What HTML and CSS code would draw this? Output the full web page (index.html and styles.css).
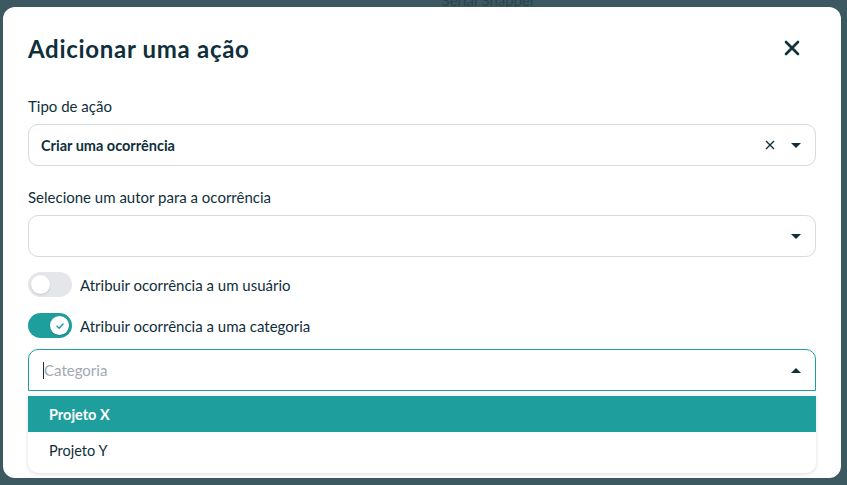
FILE: index.html
```html
<!DOCTYPE html>
<html lang="pt-BR">

<head>
    <meta charset="UTF-8" />
    <meta name="viewport" content="width=device-width" />
    <link rel="stylesheet" href="styles.css">
</head>

<body>
    <div class="backdrop">
        <div class="bg_strip">
            <span class="bg_title">Serial Snapper</span>
        </div>

        <div class="modal">
            <div class="modal_header">
                <h1 class="modal_title">Adicionar uma ação</h1>
                <button class="close_btn" aria-label="Fechar">
                    <svg width="16" height="16" viewBox="0 0 16 16">
                        <path d="M2 2 L14 14 M14 2 L2 14" stroke="#0f2f3b" stroke-width="2.6" stroke-linecap="round" />
                    </svg>
                </button>
            </div>

            <div class="field">
                <label class="field_label">Tipo de ação</label>
                <div class="select">
                    <span class="select_value">Criar uma ocorrência</span>
                    <span class="select_icons">
                        <svg width="10" height="10" viewBox="0 0 10 10">
                            <path d="M1 1 L9 9 M9 1 L1 9" stroke="#0f2f3b" stroke-width="1.4" />
                        </svg>
                        <span class="caret down"></span>
                    </span>
                </div>
            </div>

            <div class="field last">
                <label class="field_label">Selecione um autor para a ocorrência</label>
                <div class="select">
                    <span class="select_value"></span>
                    <span class="select_icons">
                        <span class="caret down"></span>
                    </span>
                </div>
            </div>

            <div class="toggle_row">
                <span class="toggle"><span class="knob"></span></span>
                <span class="toggle_label">Atribuir ocorrência a um usuário</span>
            </div>

            <div class="toggle_row">
                <span class="toggle on">
                    <span class="knob">
                        <svg width="10" height="10" viewBox="0 0 10 10">
                            <path d="M2 5.2 L4.2 7.3 L8 3" fill="none" stroke="#1f9e9e" stroke-width="1.5" stroke-linecap="round" stroke-linejoin="round" />
                        </svg>
                    </span>
                </span>
                <span class="toggle_label">Atribuir ocorrência a uma categoria</span>
            </div>

            <div class="combo">
                <div class="select open">
                    <span class="select_value placeholder"><span class="text_caret"></span>Categoria</span>
                    <span class="select_icons">
                        <span class="caret up"></span>
                    </span>
                </div>
                <ul class="menu">
                    <li class="menu_item active">Projeto X</li>
                    <li class="menu_item">Projeto Y</li>
                </ul>
            </div>
        </div>
    </div>
</body>

</html>
```

FILE: styles.css
```css
/* === modal css === */

* {
    box-sizing: border-box;
}

body {
    margin: 0;
    font-family: Lato, "Noto Sans", sans-serif;
    color: #0f2f3b;
}

.backdrop {
    /* dark overlay behind the modal */
    width: 847px;
    height: 485px;
    background: #3c5962;
    padding: 7px 6px 7px 3px;
    position: relative;
    overflow: hidden;
}

.bg_strip {
    /* page behind, peeking at the top */
    position: absolute;
    top: -9px;
    left: 0;
    right: 0;
    display: flex;
    justify-content: center;
}

.bg_title {
    margin-left: 130px;
    font-size: 15px;
    color: #2b454d;
}

.modal {
    position: relative;
    background: #fff;
    border-radius: 12px;
    height: 471px;
    padding: 22px 25px 0 25px;
}

.modal_header {
    display: flex;
    align-items: center;
    justify-content: space-between;
    height: 38px;
    margin-bottom: 30px;
}

.modal_title {
    margin: 0;
    font-size: 24px;
    font-weight: 700;
    letter-spacing: 0.7px;
}

.close_btn {
    background: none;
    border: none;
    padding: 0;
    margin-right: 16px;
    display: flex;
    cursor: pointer;
}

.field {
    display: flex;
    flex-direction: column;
    margin-bottom: 22px;
}

.field.last {
    margin-bottom: 16px;
}

.field_label {
    font-size: 15px;
    line-height: 18px;
    margin-bottom: 9px;
}

.select {
    /* select box */
    height: 42px;
    border: 1px solid #d6d9de;
    border-radius: 10px;
    display: flex;
    align-items: center;
    justify-content: space-between;
    padding: 0 14px 0 12px;
}

.select_value {
    font-size: 14.5px;
    font-weight: 700;
}

.placeholder {
    display: flex;
    align-items: center;
    color: #a3a9b2;
    font-weight: 400;
    font-size: 15px;
    margin-left: 2px;
}

.text_caret {
    width: 1px;
    height: 17px;
    background: #0f2f3b;
}

.select_icons {
    display: flex;
    align-items: center;
    gap: 16px;
}

.caret {
    width: 0;
    height: 0;
    border-left: 5px solid transparent;
    border-right: 5px solid transparent;
}

.caret.down {
    border-top: 5px solid #0f2f3b;
}

.caret.up {
    border-bottom: 5px solid #0f2f3b;
}

.toggle_row {
    display: flex;
    align-items: center;
    gap: 8px;
    height: 25px;
    margin-top: -1px;
    margin-bottom: 17px;
}

.toggle {
    /* switch */
    width: 44px;
    height: 25px;
    border-radius: 13px;
    background: #e4e6ea;
    padding: 3px;
    display: flex;
}

.toggle .knob {
    width: 19px;
    height: 19px;
    border-radius: 50%;
    background: #fff;
    box-shadow: 0 1px 2px rgba(0, 0, 0, 0.15);
    display: flex;
    align-items: center;
    justify-content: center;
}

.toggle.on {
    background: #1f9e9e;
    justify-content: flex-end;
}

.toggle_label {
    font-size: 15px;
}

.combo {
    margin-top: -6px;
}

.select.open {
    border-color: #1f9e9e;
    border-radius: 10px 10px 0 0;
}

.menu {
    /* dropdown list */
    list-style: none;
    margin: 4px 0 0 0;
    padding: 1px 0 5px 0;
    background: #fff;
    border-radius: 0 0 10px 10px;
    box-shadow: 0 1px 4px rgba(0, 0, 0, 0.14);
}

.menu_item {
    height: 36px;
    display: flex;
    align-items: center;
    padding-left: 21px;
    font-size: 14.5px;
}

.menu_item.active {
    background: #1f9e9e;
    color: #fff;
    font-weight: 700;
}
```
